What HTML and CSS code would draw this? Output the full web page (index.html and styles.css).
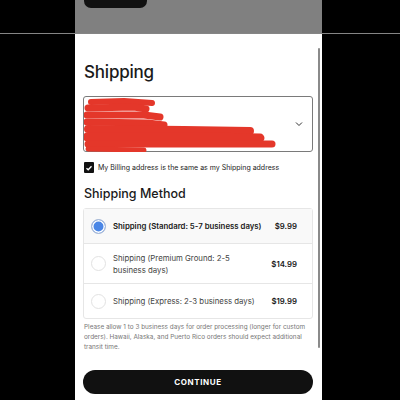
FILE: index.html
```html
<!DOCTYPE html>
<html lang="en">
<head>
    <meta charset="UTF-8">
    <meta name="viewport" content="width=device-width, initial-scale=1.0">
    <title>Shipping</title>
    <link rel="stylesheet" href="styles.css">
</head>
<body>
    <div class="top">
        <div class="top-screen">
            <div class="notch"></div>
        </div>
    </div>
    <div class="sheet">
        <div class="screen">
            <div class="scrollbar"></div>
            <h1>Shipping</h1>

            <div class="select">
                <svg class="redact" width="200" height="56" viewBox="0 0 200 56">
                    <g stroke="#e4372a" stroke-linecap="round" stroke-linejoin="round" fill="none">
                        <path d="M7 6 L40 5 L68 7" stroke-width="6"/>
                        <path d="M4 12 L50 11 L62 13" stroke-width="7"/>
                        <path d="M3 19 L60 19 L76 21" stroke-width="7"/>
                        <path d="M3 26 L64 27 L80 29" stroke-width="7"/>
                        <path d="M4 33 L100 34 L166 35" stroke-width="8"/>
                        <path d="M3 41 L120 41 L176 42" stroke-width="9"/>
                        <path d="M4 48 L140 48 L188 48" stroke-width="7"/>
                        <path d="M4 53 L60 54" stroke-width="5"/>
                    </g>
                </svg>
                <svg class="chevron" width="8" height="6" viewBox="0 0 8 6">
                    <path d="M1 1.5 L4 4.5 L7 1.5" stroke="#333" stroke-width="1" fill="none"/>
                </svg>
            </div>

            <label class="billing">
                <span class="check">
                    <svg width="8" height="8" viewBox="0 0 8 8">
                        <path d="M1.5 4.2 L3.2 5.8 L6.5 2.2" stroke="#fff" stroke-width="1.3" fill="none"/>
                    </svg>
                </span>
                My Billing address is the same as my Shipping address
            </label>

            <h2>Shipping Method</h2>

            <div class="methods">
                <div class="method selected">
                    <span class="radio"></span>
                    <span class="name">Shipping (Standard: 5-7 business days)</span>
                    <span class="price">$9.99</span>
                </div>
                <div class="method tall">
                    <span class="radio"></span>
                    <span class="name">Shipping (Premium Ground: 2-5 business days)</span>
                    <span class="price">$14.99</span>
                </div>
                <div class="method">
                    <span class="radio"></span>
                    <span class="name">Shipping (Express: 2-3 business days)</span>
                    <span class="price">$19.99</span>
                </div>
            </div>

            <p class="note">Please allow 1 to 3 business days for order processing (longer for custom orders). Hawaii, Alaska, and Puerto Rico orders should expect additional transit time.</p>

            <button class="continue">CONTINUE</button>
        </div>
    </div>
</body>
</html>
```

FILE: styles.css
```css
body {
    margin: 0;
    background-color: #000;
    font-family: Inter, "Noto Sans", sans-serif;
    color: #1a1a1a;
    overflow: hidden;
}

.top {
    height: 33px;
    padding-left: 75px;
}

.top-screen {
    width: 247px;
    height: 33px;
    background-color: #808080;
}

.notch {
    margin-left: 9px;
    width: 63px;
    height: 8px;
    background-color: #111;
    border-radius: 0 0 7px 7px;
}

.sheet {
    border-top: 1px solid #858585;
    padding-left: 75px;
}

.screen {
    position: relative;
    width: 247px;
    height: 380px;
    box-sizing: border-box;
    padding: 27px 9px 0 8px;
    background-color: #fff;
}

.scrollbar {
    position: absolute;
    left: 243px;
    top: 14px;
    width: 2px;
    height: 300px;
    background-color: #8a8a8a;
    border-radius: 1px;
}

h1 {
    margin: 0 0 0 1px;
    font-size: 17px;
    font-weight: 500;
    line-height: 22px;
    letter-spacing: -0.2px;
}

.select {
    display: flex;
    align-items: center;
    justify-content: space-between;
    margin-top: 13px;
    height: 56px;
    box-sizing: border-box;
    border: 1px solid #7a7a7a;
    border-radius: 3px;
    padding-right: 9px;
}

.redact {
    display: block;
    margin-top: -1px;
}

.billing {
    display: flex;
    align-items: center;
    gap: 4px;
    margin: 10px 0 0 1px;
    font-size: 7px;
    color: #222;
}

.check {
    display: flex;
    align-items: center;
    justify-content: center;
    width: 10px;
    height: 11px;
    background-color: #111;
    border-radius: 1px;
}

h2 {
    margin: 13px 0 0 1px;
    font-size: 12.5px;
    font-weight: 500;
    line-height: 16px;
}

.methods {
    margin-top: 6px;
    border: 1px solid #e6e6e6;
    border-radius: 3px;
}

.method {
    display: flex;
    align-items: center;
    height: 34px;
    padding: 0 15px 0 7px;
    border-top: 1px solid #e6e6e6;
    font-size: 7.8px;
    color: #444;
}

.method:first-child {
    border-top: none;
    background-color: #f9f9f9;
}

.method.tall {
    height: 39px;
}

.radio {
    width: 15px;
    height: 15px;
    box-sizing: border-box;
    border: 1px solid #e2e2e2;
    border-radius: 50%;
    margin-right: 7px;
    flex-shrink: 0;
}

.selected .radio {
    border: 1px solid #aebcd4;
    background-color: #4a86e6;
    box-shadow: inset 0 0 0 1.5px #fff;
}

.name {
    flex: 1;
    line-height: 12px;
    padding-right: 4px;
}

.tall .name {
    padding-right: 40px;
}

.selected .name {
    font-weight: 600;
    color: #1a1a1a;
}

.price {
    font-weight: 600;
    color: #1a1a1a;
}

.note {
    margin: 3px 0 0 1px;
    font-size: 6.4px;
    line-height: 10px;
    color: #777;
}

.continue {
    display: block;
    width: 230px;
    height: 24px;
    margin-top: 18px;
    background-color: #111;
    color: #fff;
    border: none;
    border-radius: 12px;
    font-family: Inter, "Noto Sans", sans-serif;
    font-size: 8px;
    font-weight: 700;
    letter-spacing: 0.6px;
}
```
